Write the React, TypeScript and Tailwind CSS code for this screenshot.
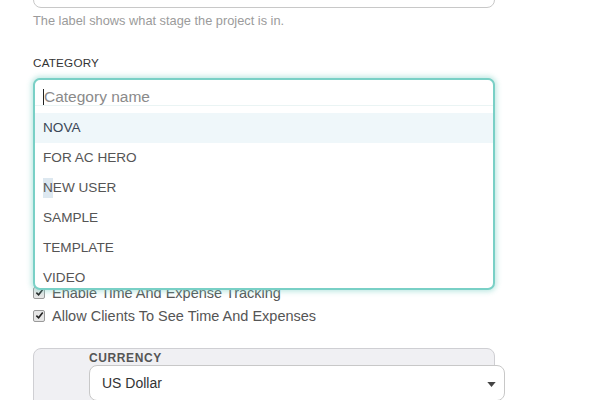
import React from 'react';

// --- Category options shown in the open dropdown ---
const CATEGORIES = ['NOVA', 'FOR AC HERO', 'NEW USER', 'SAMPLE', 'TEMPLATE', 'VIDEO', 'WEBSITE'];

const Check: React.FC<{ label: string }> = ({ label }) => (
  <label className="flex h-[23px] items-center gap-[7px]">
    <span className="flex h-[12px] w-[12px] items-center justify-center rounded-[2px] border border-[#9a9a9a] bg-[#e6e6e6]">
      <svg viewBox="0 0 10 10" className="h-[9px] w-[9px]">
        <path d="M1.5 5.2 L4 7.6 L8.6 1.8" fill="none" stroke="#222" strokeWidth="1.8" />
      </svg>
    </span>
    <span className="text-[14.5px] leading-[18px] text-[#555]">{label}</span>
  </label>
);

export default function App() {
  return (
    <div className="h-[400px] w-[600px] overflow-hidden bg-white font-['Liberation_Sans',Arial,sans-serif]">
      <div className="w-[495px] pl-[33px]">
        {/* status field, scrolled mostly off-screen */}
        <div className="mt-[-28px] h-[36px] rounded-[8px] border border-[#c8c8c8] bg-white" />
        <p className="mt-[5px] text-[12.8px] leading-[16px] text-[#9b9b9b]">The label shows what stage the project is in.</p>

        <div className="mt-[27px] text-[11.7px] leading-[14px] tracking-[0.2px] text-[#333]">CATEGORY</div>

        {/* category select with its open menu */}
        <div className="relative mt-[8px] h-[203px]">
          <div className="h-[36px] rounded-[8px] border border-[#c8c8c8] bg-white" />
          <div className="absolute left-0 right-0 top-0 h-[212px] overflow-hidden rounded-[7px] border-2 border-[#79d0c6] bg-white shadow-[0_0_5px_2px_rgba(121,208,198,0.45)]">
            <div className="flex h-[26px] items-center border-b border-[#eaf4f4] pl-[8px] pt-[8px]">
              <span className="h-[16px] w-px bg-[#222]" />
              <span className="text-[15.5px] leading-[18px] text-[#8a8a8a]">Category name</span>
            </div>
            <ul className="pt-[7px]">
              {CATEGORIES.map((c, i) => (
                <li
                  key={c}
                  className={
                    i === 0
                      ? 'flex h-[30px] items-center bg-[#eff7fa] pl-[8px] text-[13.6px] text-[#3a4756]'
                      : 'flex h-[30px] items-center pl-[8px] text-[13.6px] text-[#555]'
                  }
                >
                  {c === 'NEW USER' ? (
                    <>
                      <span className="bg-[#dde8f0]">N</span>EW USER
                    </>
                  ) : (
                    c
                  )}
                </li>
              ))}
            </ul>
          </div>
        </div>

        <Check label="Enable Time And Expense Tracking" />
        <Check label="Allow Clients To See Time And Expenses" />

        {/* currency panel */}
        <div className="mt-[21px] h-[80px] rounded-[8px] border border-[#cfcfd3] bg-[#f0f0f3] pl-[55px] pt-[2px]">
          <div className="text-[12px] font-bold leading-[14px] tracking-[0.6px] text-[#555]">CURRENCY</div>
          <div className="flex h-[36px] w-[416px] items-center justify-between rounded-[8px] border border-[#c8c8c8] bg-white pl-[12px] pr-[8px]">
            <span className="text-[14px] text-[#333]">US Dollar</span>
            <svg viewBox="0 0 10 6" className="mt-[2px] h-[5px] w-[9px]">
              <path d="M0 0 L10 0 L5 6 Z" fill="#444" />
            </svg>
          </div>
        </div>
      </div>
    </div>
  );
}
